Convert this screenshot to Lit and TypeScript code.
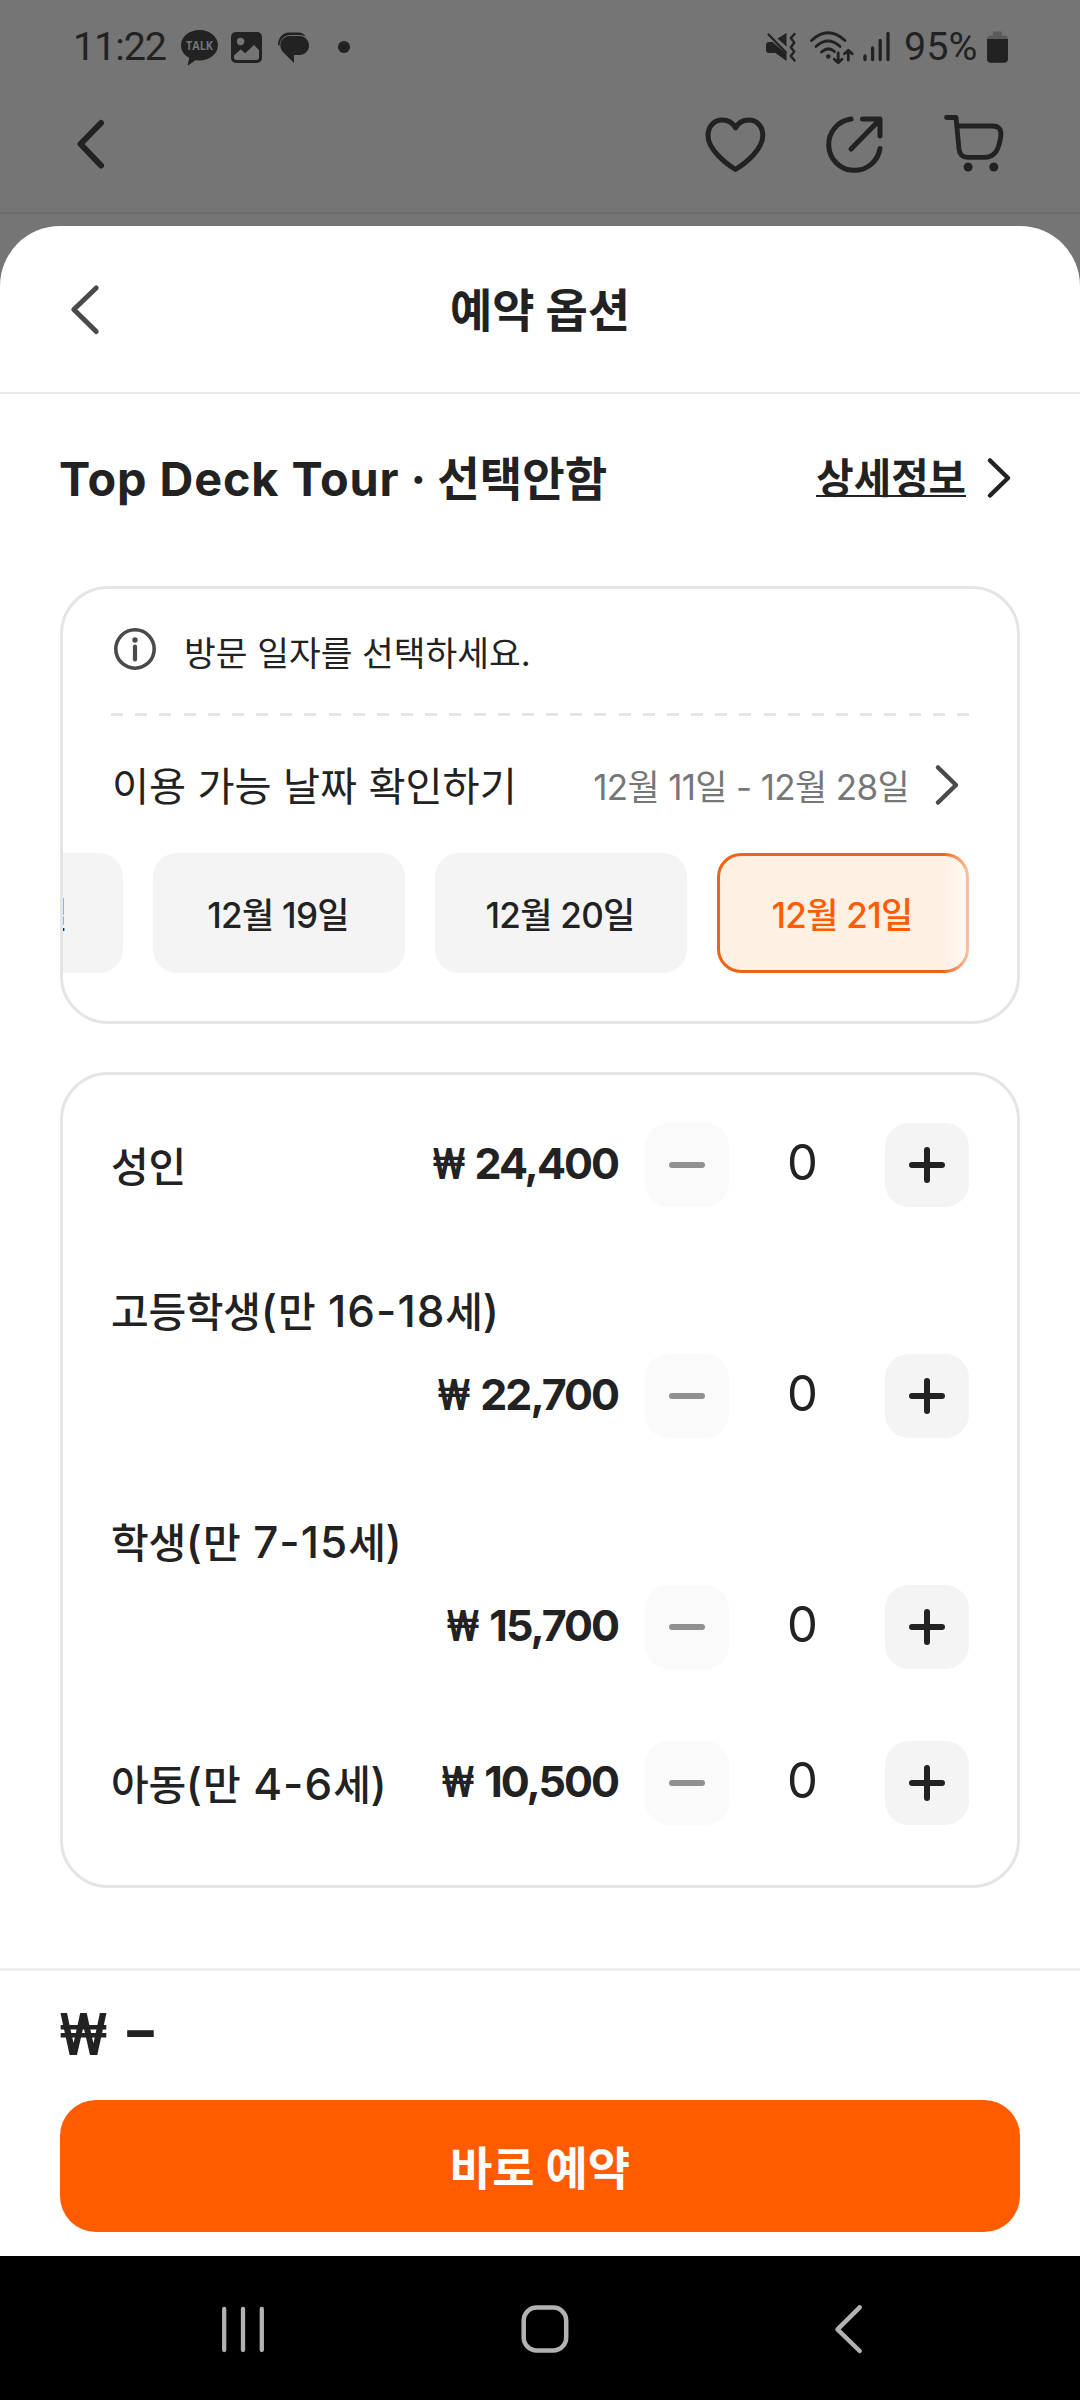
import { LitElement, html, css, svg } from "lit";
import { customElement, property } from "lit/decorators.js";

interface Ticket {
  label: string;
  price: string;
  stacked?: boolean;
}

const TICKETS: Ticket[] = [
  { label: "성인", price: "24,400" },
  { label: "고등학생(만 16-18세)", price: "22,700", stacked: true },
  { label: "학생(만 7-15세)", price: "15,700", stacked: true },
  { label: "아동(만 4-6세)", price: "10,500" },
];

const DATES = ["12월 18일", "12월 19일", "12월 20일", "12월 21일"];
const SELECTED = "12월 21일";

const base = css`
  * {
    box-sizing: border-box;
  }
  svg {
    display: block;
    flex: none;
    overflow: visible;
  }
  .line {
    fill: none;
    stroke: currentColor;
    stroke-linecap: round;
    stroke-linejoin: round;
  }
`;

@customElement("status-bar")
export class StatusBar extends LitElement {
  static styles = [
    base,
    css`
      :host {
        display: flex;
        height: 94px;
        padding: 0 72px 0 73px;
        justify-content: space-between;
        align-items: center;
        color: #222;
        font-family: Roboto, sans-serif;
        font-weight: 400;
        font-size: 39.5px;
        line-height: 40px;
      }
      .side {
        display: flex;
        align-items: center;
      }
      .time {
        width: 108px;
        letter-spacing: -1.1px;
        white-space: nowrap;
      }
      .pct {
        width: 76px;
        margin: 0 7px 0 14px;
        letter-spacing: 0;
        white-space: nowrap;
      }
      .pic {
        margin: 0 16px 0 13px;
      }
      .dot {
        width: 12px;
        height: 12px;
        margin-left: 29px;
        border-radius: 50%;
        background: #222;
      }
      .wifi {
        margin: 0 9px 0 14px;
      }
      .talk {
        font: 700 12.5px "Open Sans", sans-serif;
        fill: #757575;
      }
    `,
  ];
  render() {
    return html`
      <div class="side">
        <span class="time">11:22</span>
        <svg width="37" height="35" viewBox="181 30 37 35" fill="currentColor">
          <path d="M199.500 30C209.700 30 218 36.800 218 45.300S209.700 60.500 199.500 60.500L195.500 60.200L188.500 65.200Q187.600 65.200 187.800 64.200L189.200 58C184.200 55.300 181 50.700 181 45.300C181 36.800 189.300 30 199.500 30Z"></path>
          <text class="talk" x="186" y="50" textLength="27" lengthAdjust="spacingAndGlyphs">TALK</text>
        </svg>
        <svg class="pic" width="31" height="31" viewBox="231 32 31 31">
          <rect x="231" y="32" width="31" height="31" rx="5" fill="currentColor"></rect>
          <circle cx="240.600" cy="41.500" r="3.700" fill="#757575"></circle>
          <path d="M234 55.500L240.500 49.500L245.300 53.200L254 45L259 50V57.500Q259 60 256.500 60H236.500Q234 60 234 57.500Z" fill="#757575"></path>
        </svg>
        <svg width="31" height="31" viewBox="278 33 31 31" fill="currentColor">
          <path d="M278 46.500C278 38.500 283 33.600 289 33.600H298C301.500 33.600 304 35 305.500 37.400C303 36.200 301 36 298 36H291C284 36 280.500 39.500 279.500 46.500Z"></path>
          <path d="M289.500 37H299.500C305 37 309 41.300 309 46.500S305 56 299.500 56H294V64L284.500 54.500C281.500 51.800 280.300 49.500 280.300 46.500C280.300 41.300 284 37 289.500 37Z"></path>
        </svg>
        <span class="dot"></span>
      </div>
      <div class="side">
        <svg width="30" height="28" viewBox="766 33 30 28">
          <path d="M766 45Q766 42 769 42H772.500L786.500 54V61L775.500 53H769Q766 53 766 50ZM777.500 38.500L786.500 33V46.500Z" fill="currentColor"></path>
          <path class="line" stroke-width="2.300" d="M768.500 34.500L786 52.500"></path>
          <path class="line" stroke-width="2.400" d="M794.500 34L790.800 38L794.300 42.500L790.800 47.500L794.300 51.500L790.800 56L794.500 60.500"></path>
        </svg>
        <svg class="wifi" width="44" height="33" viewBox="810 30 44 33">
          <path class="line" stroke-width="2.900" d="M811.500 39.500Q828 24 845 39.500M816 45.500Q828 34.500 840 45.500M821.500 51Q828 45 834.500 50.500"></path>
          <circle cx="828.300" cy="55.500" r="2.300" fill="currentColor"></circle>
          <path class="line" stroke-width="2.800" d="M838.200 52V61.500M834.300 58.300L838.200 61.800L842 58.300M848.300 59V49.500M844.500 52.700L848.300 49.200L852.200 52.700"></path>
        </svg>
        <svg width="27" height="30" viewBox="863 32 27 30">
          <path class="line" stroke-width="3.300" d="M865 56V59.500M872.600 48V59.500M880.200 40.300V59.500M888 33.500V59.500"></path>
        </svg>
        <span class="pct">95%</span>
        <svg width="21" height="32" viewBox="987 31 21 32">
          <path d="M993 39V32.500Q993 31.500 994 31.500H1001Q1002 31.500 1002 32.500V35.500H1004Q1008 35.500 1008 39.500H987Q987 35.500 991 35.500H993Z" fill="#5b5b5b"></path>
          <path d="M987 39H1008V59Q1008 62.700 1004 62.700H991Q987 62.700 987 59Z" fill="currentColor"></path>
        </svg>
      </div>
    `;
  }
}

@customElement("app-bar")
export class AppBar extends LitElement {
  static styles = [
    base,
    css`
      :host {
        display: flex;
        height: 120px;
        padding: 20px 75.5px 0 77px;
        justify-content: space-between;
        align-items: flex-start;
        border-bottom: 2px solid #6c6c6c;
        color: #222;
      }
      .actions {
        display: flex;
        gap: 61px;
      }
    `,
  ];
  render() {
    return html`
      <svg width="28" height="60" viewBox="77 114 28 60">
        <path class="line" stroke-width="6" d="M101 123L80.500 144L101 165.500"></path>
      </svg>
      <div class="actions">
        <svg width="61" height="60" viewBox="704.500 114 61 60">
          <path class="line" stroke-width="5" d="M735 169.500C724 162.500 707.500 149 707.500 135.500C707.500 126 714 120 721.500 120C727.500 120 732.500 123 735 128C737.500 123 742.500 120 748.500 120C756 120 762.300 126 762.300 135.500C762.300 149 746 162.500 735 169.500Z"></path>
        </svg>
        <svg width="56" height="60" viewBox="826.500 114 56 60">
          <path class="line" stroke-width="5" d="M850.500 119A25.800 25.800 0 1 0 879.500 148.500M862 119H879.500V136M850.500 149L878.500 120.500"></path>
        </svg>
        <svg width="61" height="60" viewBox="943.500 114 61 60">
          <path class="line" stroke-width="4.800" d="M946 117.500H955.500L958.500 149Q959.500 157.300 967 157.300H983.500C995 157.300 998.500 149 1000.300 136Q1001.500 126 992 126H958"></path>
          <circle cx="967.600" cy="167" r="4.500" fill="currentColor"></circle>
          <circle cx="993.300" cy="167" r="4.500" fill="currentColor"></circle>
        </svg>
      </div>
    `;
  }
}

@customElement("ticket-row")
export class TicketRow extends LitElement {
  @property() label = "";
  @property() price = "";
  @property({ type: Boolean, reflect: true }) stacked = false;

  static styles = [
    base,
    css`
      :host {
        display: flex;
        justify-content: space-between;
        align-items: center;
        color: #222;
      }
      :host([stacked]) {
        flex-direction: column;
        align-items: stretch;
        gap: 9px;
      }
      .label {
        font-size: 41px;
        font-weight: 500;
        line-height: 66px;
        padding-top: 3px;
        white-space: nowrap;
        letter-spacing: -0.3px;
      }
      :host([stacked]) .label {
        padding-top: 0;
      }
      .lat {
        font-size: 44px;
        line-height: 60px;
        letter-spacing: 1px;
      }
      .controls {
        display: flex;
        height: 84px;
        align-items: center;
        justify-content: flex-end;
      }
      .price {
        display: flex;
        align-items: center;
        margin: 0 27px 5px 0;
        font-size: 43px;
        font-weight: 700;
        line-height: 50px;
        letter-spacing: -2px;
      }
      .won {
        display: flex;
        justify-content: center;
        width: 32px;
        margin-right: 10px;
        letter-spacing: 0;
        transform: scaleX(0.75);
      }
      .btn {
        display: flex;
        width: 84px;
        height: 84px;
        align-items: center;
        justify-content: center;
        border-radius: 24px;
        background: #f4f4f4;
      }
      .btn.off {
        background: #fafafa;
        color: #909090;
      }
      .count {
        width: 156px;
        padding: 0 9px 4px 0;
        text-align: center;
        font-size: 49px;
        line-height: 50px;
        font-weight: 400;
      }
    `,
  ];
  /* Parentheses and digits are set slightly larger than the Hangul around them. */
  private labelParts() {
    return this.label
      .split(/([^가-힣]+)/)
      .filter((p) => p)
      .map((p) => (/[가-힣]/.test(p) ? p : html`<span class="lat">${p}</span>`));
  }
  render() {
    return html`
      <span class="label">${this.labelParts()}</span>
      <div class="controls">
        <span class="price"><span class="won">₩</span>${this.price}</span>
        <span class="btn off">
          <svg width="36" height="36" viewBox="0 0 36 36">
            <path class="line" stroke-width="6" d="M3 18H33"></path>
          </svg>
        </span>
        <span class="count">0</span>
        <span class="btn">
          <svg width="36" height="36" viewBox="0 0 36 36">
            <path class="line" stroke-width="6" d="M3 18H33M18 3V33"></path>
          </svg>
        </span>
      </div>
    `;
  }
}

@customElement("app-root")
export class AppRoot extends LitElement {
  static styles = [
    base,
    css`
      :host {
        display: flex;
        flex-direction: column;
        width: 1080px;
        height: 2400px;
        overflow: hidden;
        background: #757575;
        color: #222;
        font-family: Inter, "Noto Sans CJK KR", sans-serif;
      }
      .sheet {
        display: flex;
        flex-direction: column;
        height: 2030px;
        margin-top: 12px;
        border-radius: 60px 60px 0 0;
        background: #fff;
      }
      .sheet-head {
        display: grid;
        grid-template-columns: 60px 1fr 60px;
        align-items: center;
        height: 168px;
        padding: 0 60px;
        border-bottom: 2px solid #e8e8e8;
      }
      .sheet-head svg {
        margin: 0 0 0 10px;
        color: #4a4a4a;
      }
      .sheet-title {
        padding-top: 1px;
        text-align: center;
        font-size: 46px;
        line-height: 60px;
        font-weight: 700;
      }
      .product {
        display: flex;
        justify-content: space-between;
        align-items: center;
        height: 171px;
        padding: 0 69px 0 59px;
      }
      .product-name {
        margin-bottom: 1px;
        font-size: 46.8px;
        line-height: 60px;
        font-weight: 700;
        white-space: nowrap;
      }
      .latin {
        letter-spacing: 0.9px;
      }
      .option {
        font-size: 46.2px;
      }
      .detail {
        display: flex;
        align-items: center;
        gap: 21px;
        margin-bottom: 3px;
        font-size: 40.700px;
        line-height: 60px;
        font-weight: 700;
      }
      .detail-text {
        display: flex;
        height: 37px;
        padding-top: 4px;
        align-items: center;
        border-bottom: 2px solid #222;
      }
      .cards {
        display: flex;
        flex-direction: column;
        gap: 48px;
        padding: 21px 60px 0;
      }
      .card {
        border: 3px solid #e5e5e5;
        border-radius: 48px;
        padding: 0 48px;
      }
      .dates {
        height: 438px;
        overflow: hidden;
      }
      .notice {
        display: flex;
        align-items: center;
        gap: 28px;
        height: 124px;
        padding-left: 3px;
        font-size: 34.5px;
        line-height: 50px;
      }
      .notice svg {
        margin-bottom: 5px;
        color: #4a4a4a;
      }
      .notice-text {
        padding-top: 6px;
      }
      .dashes {
        height: 3px;
        background: repeating-linear-gradient(90deg, #e5e5e5 0 12px, transparent 12px 24.170px);
      }
      .range {
        display: flex;
        align-items: center;
        height: 137px;
        padding: 4px 10px 0 1px;
        line-height: 50px;
      }
      .range-label {
        flex: 1;
        font-size: 40.3px;
      }
      .range-value {
        margin-right: 26px;
        font-size: 35px;
        letter-spacing: -0.65px;
        color: #777;
      }
      .range svg {
        color: #4a4a4a;
        margin-bottom: 3px;
      }
      .chips {
        display: flex;
        justify-content: flex-end;
        gap: 30px;
      }
      .chip {
        display: flex;
        flex: none;
        width: 252px;
        height: 120px;
        padding: 0 2px 1px 0;
        align-items: center;
        justify-content: center;
        border-radius: 24px;
        background: #f4f4f4;
        font-size: 35px;
        font-weight: 500;
        letter-spacing: -0.7px;
      }
      .chip.on {
        position: relative;
        border: 3px solid #f26212;
        background: #fff0e4;
        color: #ff5c00;
      }
      .chip.on::after {
        content: "";
        position: absolute;
        inset: -3px -3px -3px auto;
        width: 26px;
        background: linear-gradient(90deg, rgba(255, 255, 255, 0), rgba(255, 255, 255, 0.62));
      }
      .tickets {
        display: flex;
        flex-direction: column;
        gap: 72px;
        height: 816px;
        padding-top: 48px;
      }
      .footer {
        display: flex;
        flex-direction: column;
        margin-top: auto;
        height: 288px;
        padding: 0 60px;
        border-top: 3px solid #eee;
      }
      .total {
        display: flex;
        align-items: center;
        height: 129px;
        gap: 20px;
        padding-bottom: 3px;
        font-size: 58px;
        font-weight: 700;
      }
      .total-won {
        display: flex;
        justify-content: center;
        width: 47px;
        transform: scaleX(0.82);
      }
      .total-dash {
        transform: translateY(-4px) scaleX(1.38);
      }
      .cta {
        display: flex;
        height: 132px;
        padding-bottom: 2px;
        align-items: center;
        justify-content: center;
        border-radius: 36px;
        background: #ff5c00;
        color: #fff;
        font-size: 46px;
        font-weight: 700;
      }
      .nav {
        display: flex;
        height: 144px;
        padding: 2px 217px 0 220px;
        align-items: center;
        background: #000;
        color: #b2b2b2;
      }
      .home {
        margin: 0 266px 0 255px;
      }
    `,
  ];
  private chevron() {
    return svg`<path class="line" stroke-width="4.500" d="M3 2.500L21 20L3 37.500"></path>`;
  }
  render() {
    return html`
      <status-bar></status-bar>
      <app-bar></app-bar>
      <main class="sheet">
        <header class="sheet-head">
          <svg width="28" height="50" viewBox="70 284 28 50">
            <path class="line" stroke-width="5" d="M96.200 288L73.800 309.500L96.200 331.500"></path>
          </svg>
          <span class="sheet-title">예약 옵션</span>
        </header>
        <div class="product">
          <span class="product-name"><span class="latin">Top Deck Tour</span> · <span class="option">선택안함</span></span>
          <span class="detail">
            <span class="detail-text">상세정보</span>
            <svg width="24" height="40" viewBox="0 0 24 40">${this.chevron()}</svg>
          </span>
        </div>
        <div class="cards">
          <section class="card dates">
            <div class="notice">
              <svg width="42" height="42" viewBox="0 0 42 42">
                <circle class="line" cx="21" cy="21" r="19.200" stroke-width="3.600"></circle>
                <circle cx="21" cy="12" r="2.700" fill="currentColor"></circle>
                <path class="line" stroke-width="4.200" d="M21 18.500V31.500"></path>
              </svg>
              <span class="notice-text">방문 일자를 선택하세요.</span>
            </div>
            <div class="dashes"></div>
            <div class="range">
              <span class="range-label">이용 가능 날짜 확인하기</span>
              <span class="range-value">12월 11일 - 12월 28일</span>
              <svg width="24" height="40" viewBox="0 0 24 40">${this.chevron()}</svg>
            </div>
            <div class="chips">
              ${DATES.map((d) => html`<span class="chip ${d === SELECTED ? "on" : ""}">${d}</span>`)}
            </div>
          </section>
          <section class="card tickets">
            ${TICKETS.map(
              (t) => html`<ticket-row .label=${t.label} .price=${t.price} ?stacked=${!!t.stacked}></ticket-row>`
            )}
          </section>
        </div>
        <footer class="footer">
          <div class="total"><span class="total-won">₩</span><span class="total-dash">-</span></div>
          <div class="cta">바로 예약</div>
        </footer>
      </main>
      <nav class="nav">
        <svg width="46" height="50" viewBox="220 2304 46 50">
          <path class="line" stroke-width="4.300" d="M224.200 2309V2350M243 2309V2350M261.800 2309V2350"></path>
        </svg>
        <svg class="home" width="48" height="50" viewBox="521 2304 48 50">
          <rect class="line" x="523.700" y="2307.500" width="42.500" height="43" rx="13" stroke-width="4.500"></rect>
        </svg>
        <svg width="28" height="50" viewBox="835 2304 28 50">
          <path class="line" stroke-width="4.500" d="M859.700 2307.300L837.500 2329.300L859.700 2351"></path>
        </svg>
      </nav>
    `;
  }
}
